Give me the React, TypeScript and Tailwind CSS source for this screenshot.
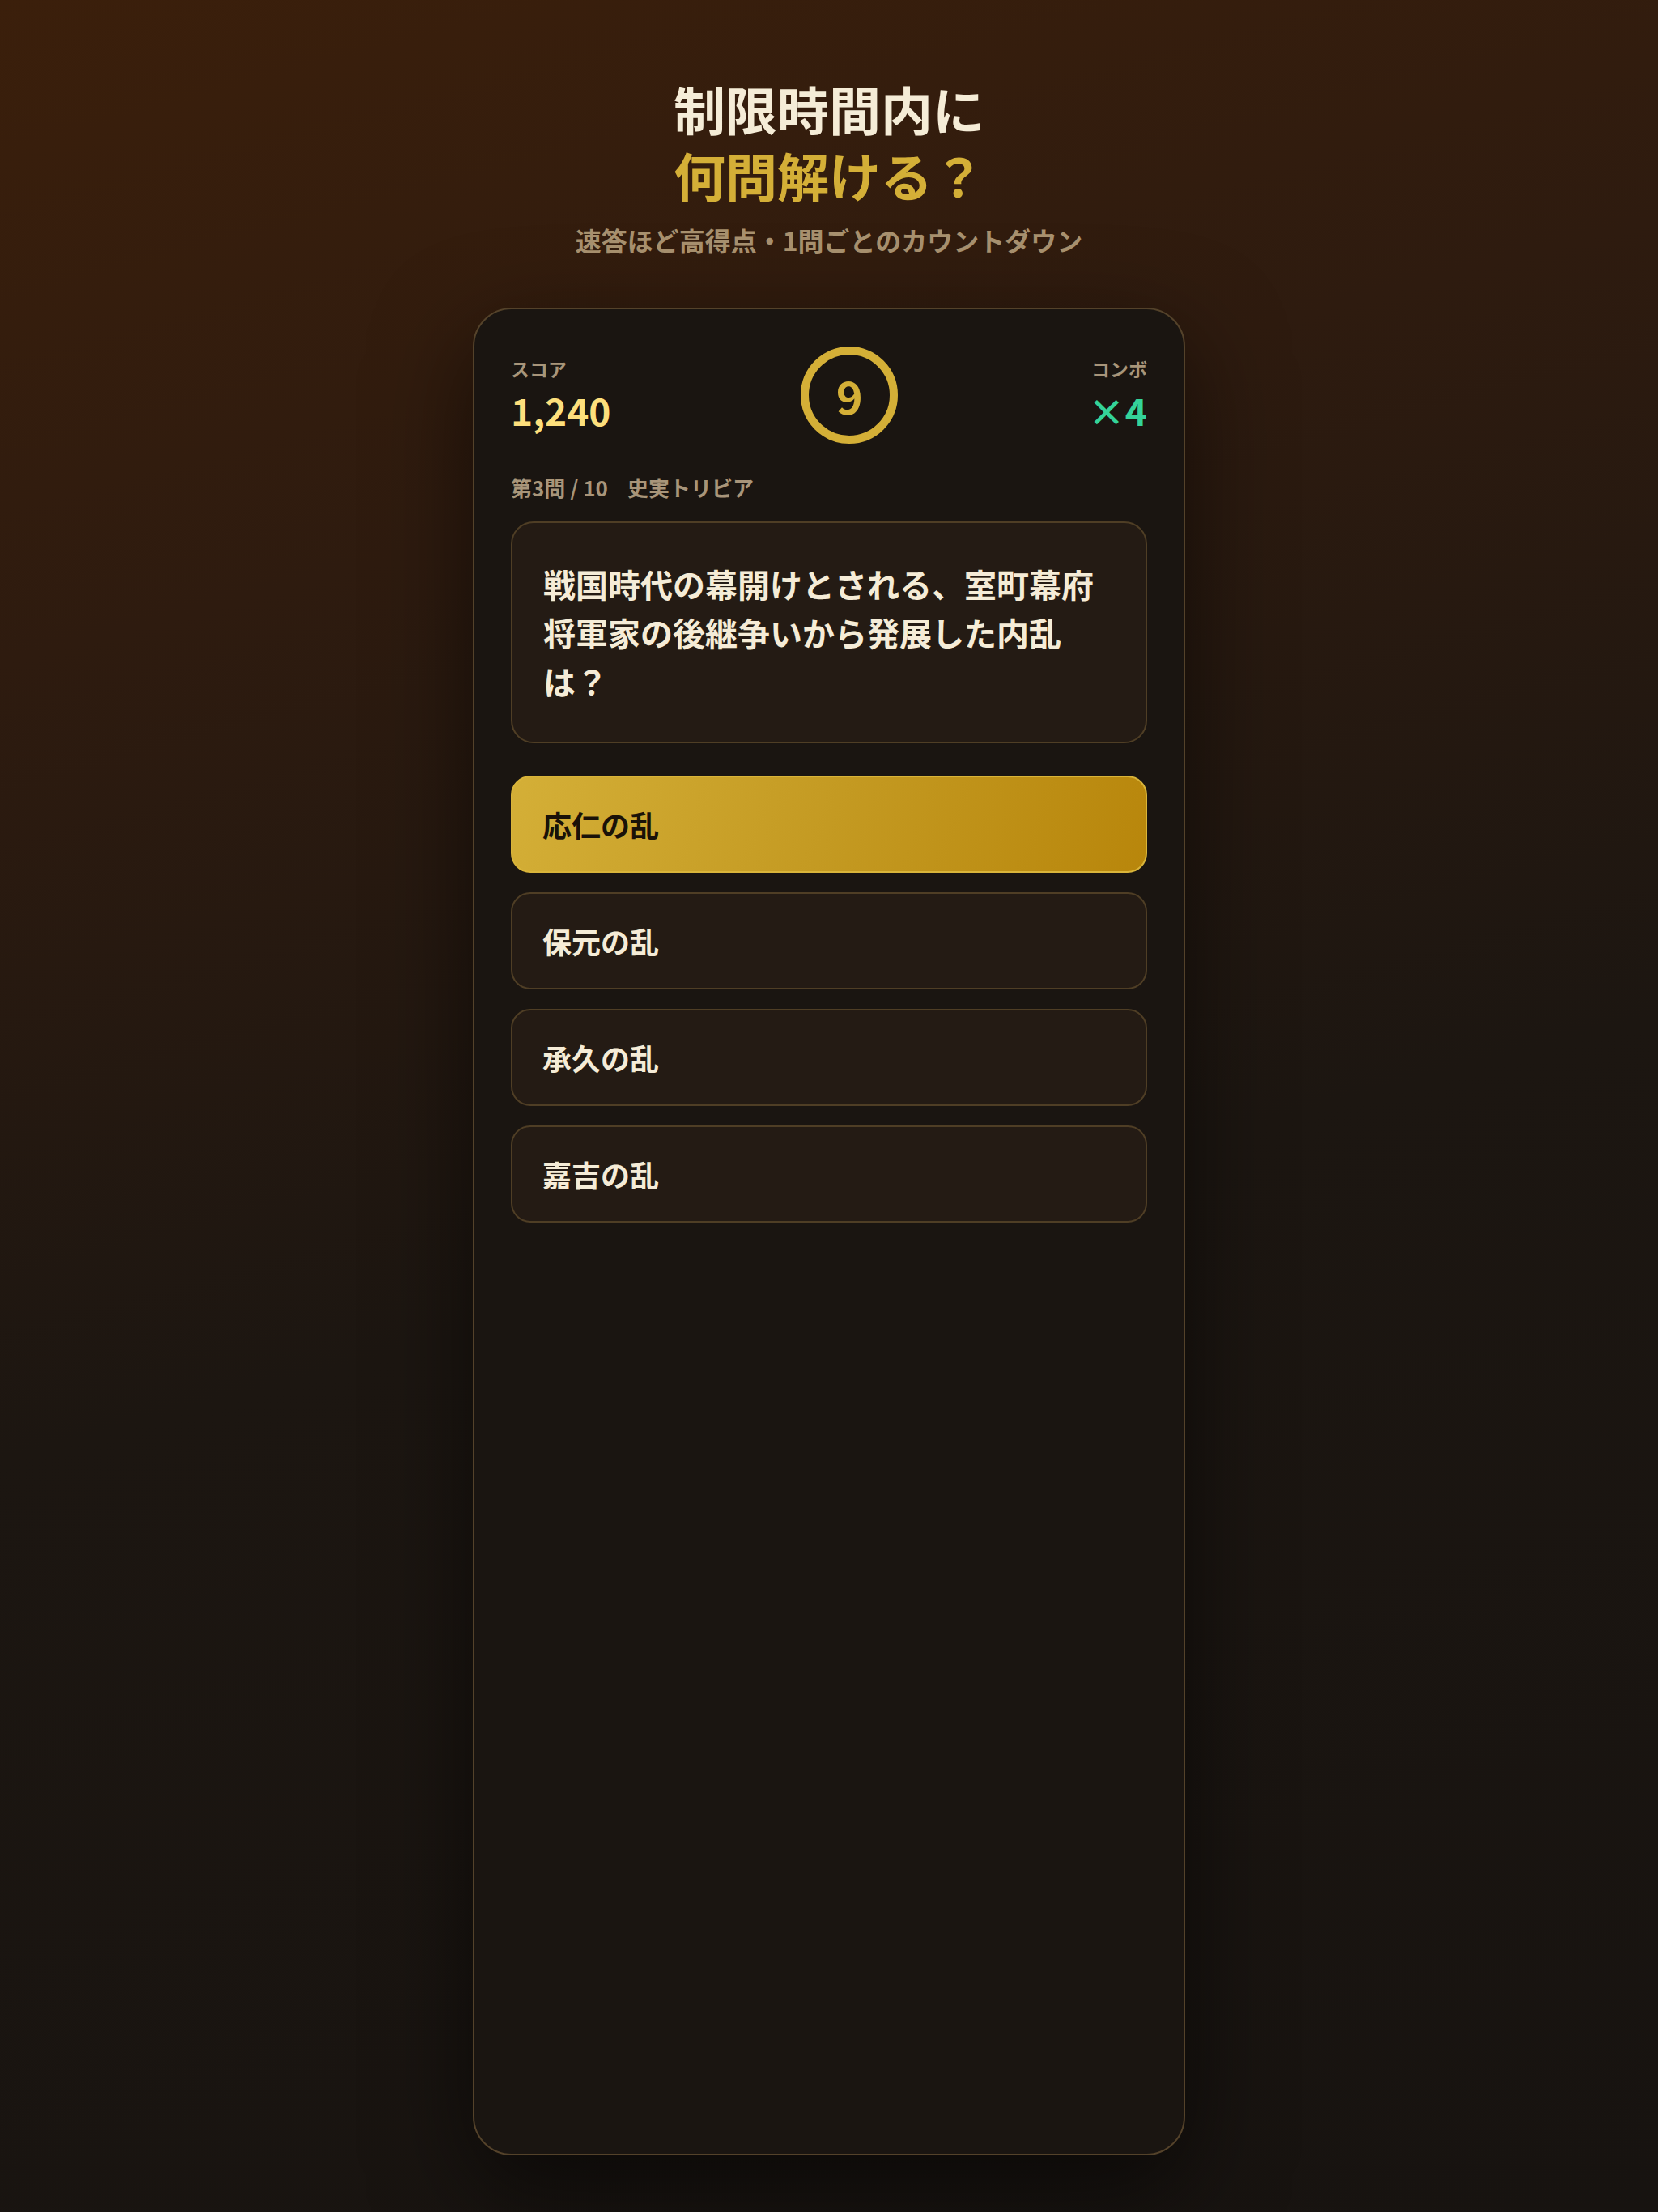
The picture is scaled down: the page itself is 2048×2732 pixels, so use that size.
import React from 'react';

const options = [
  { label: '応仁の乱', selected: true },
  { label: '保元の乱', selected: false },
  { label: '承久の乱', selected: false },
  { label: '嘉吉の乱', selected: false },
];

export default function App() {
  return (
    <div className="min-h-screen w-full bg-[linear-gradient(165deg,#3b1f0b_0%,#2e1b0f_25%,#1c1611_55%,#171310_100%)] font-['Noto_Sans_CJK_JP','Noto_Sans',sans-serif] flex flex-col items-center pt-[92px]">
      {/* Heading */}
      <h1 className="text-center text-[64px] leading-[82px] font-bold">
        <span className="block text-[#f5ecd7]">制限時間内に</span>
        <span className="block text-[#d4af37]">何問解ける？</span>
      </h1>
      <p className="mt-[16px] text-[32px] leading-[48px] font-bold text-[#a8916f]">
        速答ほど高得点・1問ごとのカウントダウン
      </p>

      {/* Quiz card */}
      <div className="mt-[60px] w-[880px] h-[2282px] rounded-[48px] border-2 border-[#54422a] bg-[#1a1511] px-[45px] pt-[46px] shadow-[0_40px_120px_rgba(0,0,0,0.55)]">
        {/* Header */}
        <div className="flex items-center justify-between">
          <div>
            <div className="text-[23px] leading-[26px] font-bold text-[#a8957a]">スコア</div>
            <div className="mt-[10px] text-[46px] leading-[56px] font-bold text-[#fddf7c]">1,240</div>
          </div>
          <div className="w-[120px] h-[120px] rounded-full border-[10px] border-[#d4af37] flex items-center justify-center">
            <span className="text-[56px] leading-none font-semibold text-[#d4af37]">9</span>
          </div>
          <div className="text-right">
            <div className="text-[23px] leading-[26px] font-bold text-[#a8957a]">コンボ</div>
            <div className="mt-[10px] text-[46px] leading-[56px] font-bold text-[#34d399]">×4</div>
          </div>
        </div>

        {/* Question meta */}
        <div className="mt-9 flex gap-6 text-[26px] leading-[36px] font-bold text-[#a8957a]">
          <span>第3問 / 10</span>
          <span>史実トリビア</span>
        </div>

        {/* Question */}
        <div className="mt-6 rounded-[28px] border-2 border-[#4f3e25] bg-[#241b14] pl-[38px] pr-10 py-[45px]">
          <p className="text-[40px] leading-[60px] font-bold text-[#f5ecd7]">
            戦国時代の幕開けとされる、室町幕府将軍家の後継争いから発展した内乱は？
          </p>
        </div>

        {/* Options */}
        <div className="mt-10 flex flex-col gap-6">
          {options.map((o) => (
            <button
              key={o.label}
              className={`h-[120px] w-full rounded-3xl border-2 px-[37px] text-left text-[36px] font-bold ${
                o.selected
                  ? 'border-[#d9b43a] bg-[linear-gradient(110deg,#d4af37_0%,#c49a22_50%,#b8860b_100%)] text-[#1a1208]'
                  : 'border-[#4f3e25] bg-[#241b14] text-[#f5ecd7]'
              }`}
            >
              {o.label}
            </button>
          ))}
        </div>
      </div>
    </div>
  );
}
